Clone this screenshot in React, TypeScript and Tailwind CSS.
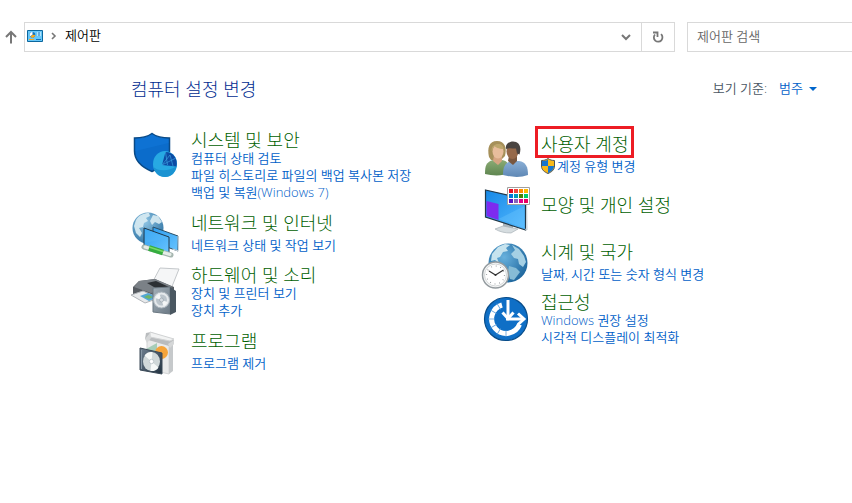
import type { ReactNode } from "react";

interface CategoryProps {
  icon: ReactNode;
  title: string;
  links?: string[];
  shield?: boolean;
  highlighted?: boolean;
}

const Svg = ({ children }: { children: ReactNode }) => (
  <svg viewBox="0 0 48 48" className="w-12 h-12 shrink-0 overflow-visible" aria-hidden="true">
    {children}
  </svg>
);

const SecurityIcon = () => (
  <Svg>
    <path d="M21 3.500C16 7 10 8 3.500 8v13c0 10 7 16 17.500 20.500C31.500 37 38.500 31 38.500 21V8C32 8 26 7 21 3.500Z" fill="#0b6ccb" stroke="#0a4a86" strokeWidth="1.500" />
    <path d="M21 4.500C16 8 10 9 4.500 9v12l33-8V9C32 9 26 8 21 4.500Z" fill="#1177d8" opacity=".6" />
    <ellipse cx="34" cy="34" rx="12" ry="13" fill="#27a9e3" />
    <path d="M22.500 37C26 41 38 42 45.500 36 44.500 43 40 47 34 47c-6 0-10.500-4-11.500-10Z" fill="#1b93d2" />
    <path d="M34.500 22 31 35l14.500 1.500C47 29 42.500 22 34.500 22Z" fill="#0c4ba4" />
    <path d="M31 35 39 25l3 11M31 35l14-7M34.500 22l2 13" stroke="#3a9fe0" strokeWidth=".7" fill="none" />
  </Svg>
);

const NetworkIcon = () => (
  <Svg>
    <defs>
      <radialGradient id="netGlobe" cx=".4" cy=".3" r=".8">
        <stop offset="0" stopColor="#8fc5e4" />
        <stop offset="1" stopColor="#286d9f" />
      </radialGradient>
      <linearGradient id="netScreen" x1="0" y1="0" x2="1" y2="1">
        <stop offset="0" stopColor="#2d9df0" />
        <stop offset="1" stopColor="#67c4ff" />
      </linearGradient>
    </defs>
    <circle cx="17" cy="19" r="15.500" fill="url(#netGlobe)" />
    <path d="M5 11C8 6 13 4 18 4l1 3-4 2 2 3-4 2-1 4-4 1 3 5-2 4-4-4-2-7Z" fill="#d9ecf3" opacity=".9" />
    <path d="m22 6 5 1 4 6-3 2-4-2-3 3-2-4Z" fill="#d9ecf3" opacity=".9" />
    <path d="m22 18 25 9v15l-25-9Z" fill="url(#netScreen)" stroke="#294f68" />
    <path d="m47 27 .500 15-6-2" stroke="#d6dde0" fill="none" />
    <path d="m13 19 25 9v16l-25-8Z" fill="url(#netScreen)" stroke="#20394a" />
    <path d="m14 34 23-5-23-9Z" fill="#55b7f8" opacity=".45" />
    <path d="m13 38 27 8" stroke="#a6b6b0" strokeWidth="5" strokeLinecap="round" />
    <path d="m14 38 25 7.500" stroke="#e6ece8" strokeWidth="3" strokeLinecap="round" />
    <path d="m18 39 14 4.500" stroke="#35ad3f" strokeWidth="6" />
    <path d="m18 38 14 4.500" stroke="#79da68" strokeWidth="1.500" />
  </Svg>
);

const HardwareIcon = () => (
  <Svg>
    <defs>
      <linearGradient id="speaker" x1="0" y1="0" x2="1" y2="1">
        <stop offset="0" stopColor="#a3afb8" />
        <stop offset="1" stopColor="#6b7985" />
      </linearGradient>
    </defs>
    <path d="m29 0 19 1-8 20-20-4Z" fill="#f5f6f7" stroke="#c4c8cb" />
    <path d="m8 13 16-2 19 8v8l-26 6L2 26v-7Z" fill="#565b61" />
    <path d="m8 13 16-2 18 8-22 6L3 19Z" fill="#7b8187" />
    <path d="m16 15 9-2 13 6-10 3Z" fill="#2c3034" />
    <path d="m0 27 12-4 16 7-14 5Z" fill="#e8eaec" stroke="#b0b4b8" />
    <path d="m9 28 8-3 10 4-9 4Z" fill="#53a7d6" />
    <path d="m13 29 4-2 5 2-4 2Z" fill="#6eb568" />
    <path d="m22 20 17-1v27l-17-2Z" fill="url(#speaker)" stroke="#6b7882" />
    <path d="m39 19 6 4v21l-6 3Z" fill="#4a5761" />
    <circle cx="30.500" cy="32" r="8" fill="#e4e8eb" stroke="#aab4bc" />
    <circle cx="30.500" cy="32" r="5.500" fill="#bcc5cc" />
    <path d="m30.500 32-6-2a6 6 0 0 1 4-4Zm0 0 6 2a6 6 0 0 1-4 4Z" fill="#f4f6f7" />
    <circle cx="30.500" cy="32" r="2" fill="#d5dbe0" stroke="#9aa5ae" strokeWidth=".7" />
  </Svg>
);

const ProgramsIcon = () => (
  <Svg>
    <defs>
      <linearGradient id="discCase" x1="0" y1="0" x2="1" y2="1">
        <stop offset="0" stopColor="#6f8191" />
        <stop offset="1" stopColor="#22313f" />
      </linearGradient>
    </defs>
    <path d="m16 12 22 5v30l-22-5Z" fill="#e9eaea" stroke="#d3d5d6" />
    <path d="m38 17 4-2v29l-4 3Z" fill="#c6c9cb" />
    <path d="m15 6 5-1 23 8v4l-5 2-24-7Z" fill="#b9bcbe" />
    <path d="m19 5 24 7-4 2-20-4Z" fill="#f2f3f3" stroke="#d1d3d4" />
    <path d="m14 12 5-6 1 5-4 5ZM37 17l6-4v4l-4 4Z" fill="#d5d7d8" />
    <path d="m15 22 11-6v10l-4 2Z" fill="#a6cdb8" />
    <circle cx="30.500" cy="25.500" r="6.500" fill="#f5a43a" />
    <path d="m9 21 22 5v21L9 43Z" fill="url(#discCase)" stroke="#3a4957" />
    <ellipse cx="20.500" cy="34.500" rx="8.500" ry="9.500" fill="#d0d8d9" />
    <path d="m20.500 34.500-7-6c2-3 5-4 8-3.500Zm0 0 7 6c-2 3-5 4-8 3.500Z" fill="#f6f9f8" />
    <circle cx="20.500" cy="34.500" r="2.200" fill="#fff" stroke="#b5bfc4" strokeWidth=".8" />
    <path d="M10.500 23v19" stroke="#8798a6" />
  </Svg>
);

const UsersIcon = () => (
  <Svg>
    <defs>
      <linearGradient id="womanTop" x1="0" y1="0" x2="0" y2="1">
        <stop offset="0" stopColor="#8bab75" />
        <stop offset="1" stopColor="#5f8650" />
      </linearGradient>
      <linearGradient id="manTop" x1="0" y1="0" x2="0" y2="1">
        <stop offset="0" stopColor="#8aafd6" />
        <stop offset="1" stopColor="#5f88b5" />
      </linearGradient>
    </defs>
    <path d="M8 27c-2-9 0-16 8-16 8 0 10 7 8 15l-4 4H10Z" fill="#a6905a" />
    <path d="M4 44c0-8 1-12 8-14h9c6 1 8 5 8 13-7 3-17 3-25 1Z" fill="url(#womanTop)" />
    <path d="M13 25h8v6l-4 4-5-4Z" fill="#d6a582" />
    <ellipse cx="17" cy="21.500" rx="5.500" ry="7" fill="#e8bd9c" />
    <path d="M10.500 21c0-5 3-7 7-7 3 0 5 2 5 5-5 0-8-2-9-3Z" fill="#bda66c" />
    <path d="M22 45c0-8 2-12 8-14h8c7 1 9 6 9 14-8 3-17 2-25 0Z" fill="url(#manTop)" />
    <path d="M28 26h8v5l-4 4-5-4Z" fill="#79573f" />
    <ellipse cx="31.500" cy="21.500" rx="6" ry="7.500" fill="#96694a" />
    <path d="M25 19C24 14 28 11.500 32 11.500c6 0 9 5 6.500 13l-2.500-1-1-5c-4 0-7-1-10 .500Z" fill="#4a4441" />
  </Svg>
);

const SWATCHES = [
  "#e81123", "#f2453c", "#ff8c00", "#ffb900",
  "#0078d7", "#0099bc", "#498205", "#00cc6a",
  "#5b10c5", "#8764b8", "#e3008c", "#ea005e",
];

const AppearanceIcon = () => (
  <Svg>
    <defs>
      <linearGradient id="monitor" x1="0" y1="0" x2="1" y2="1">
        <stop offset="0" stopColor="#1688e6" />
        <stop offset="1" stopColor="#55baff" />
      </linearGradient>
    </defs>
    <path d="m22 36 10 4v5l-10-1Z" fill="#aab5bc" />
    <path d="m14 45 8-3 15 3-7 4c-6 0-11-1-16-4Z" fill="#d6dde0" stroke="#a9b2b7" strokeWidth=".7" />
    <path d="m4.500 6 40 9v31l-40-13Z" fill="url(#monitor)" stroke="#223746" strokeWidth="1.200" />
    <path d="m45.500 16 .500 30-2-1" stroke="#bec8cd" fill="none" />
    <path d="m5.500 17 12 3v16L5.500 32Z" fill="#7d2bef" />
    <path d="m17.500 35 26-13v22Z" fill="#78ccff" opacity=".3" />
    <path d="M26.500 3.500h22v17h-22Z" fill="#fff" stroke="#a0a0a0" />
    {SWATCHES.map((c, i) => (
      <rect key={c} x={28 + (i % 4) * 5} y={5 + Math.floor(i / 4) * 5} width="4" height="4" fill={c} />
    ))}
  </Svg>
);

const ClockIcon = () => (
  <Svg>
    <defs>
      <radialGradient id="clockGlobe" cx=".4" cy=".35" r=".7">
        <stop offset="0" stopColor="#68b1dd" />
        <stop offset="1" stopColor="#1c649b" />
      </radialGradient>
    </defs>
    <circle cx="27" cy="25" r="19.500" fill="url(#clockGlobe)" />
    <path d="m11 16 6-7 7-3 5 1-4 3 2 3-5 1-3 5-3 1 2 5-4-3-4 1Z" fill="#c6e3ee" />
    <path d="m31 7 7 4 5 7 2 6-3 5-4-3-1-5-4-1-3-4 4-4Z" fill="#a5d0e4" />
    <path d="m28 28 7 2 4 4-6 8-4-1-2-8Z" fill="#86bcd6" />
    <circle cx="14.500" cy="37" r="13" fill="#f7f8f8" stroke="#949b9f" strokeWidth="1.500" />
    <circle cx="14.500" cy="37" r="11" fill="#fff" stroke="#d4d7d8" />
    <circle cx="14.500" cy="37" r="9" fill="none" stroke="#8b9094" strokeWidth="1.200" strokeDasharray=".8 3.912" />
    <path d="m8 33 6.500 4 8-5" stroke="#333" strokeWidth="1.200" fill="none" />
    <circle cx="14.500" cy="37" r="1" fill="#333" />
  </Svg>
);

const RING_GAPS = [180, 210, 240, 270, 300, 330];

const AccessIcon = () => (
  <Svg>
    <circle cx="25" cy="24" r="21.500" fill="#0f6fc6" stroke="#084c89" strokeWidth="1.200" />
    <path d="M21 10A14.500 14.500 0 1 0 38.500 29.500" fill="none" stroke="#fff" strokeWidth="5" />
    {RING_GAPS.map((deg) => (
      <path key={deg} d="M25 6v7" stroke="#5b9cd8" strokeWidth=".8" transform={`rotate(${deg} 25 24)`} />
    ))}
    <path d="M27 4v18M28 24h15" stroke="#0f6fc6" strokeWidth="5" />
    <path d="M27 5v18M25 24h18" stroke="#fff" strokeWidth="3" />
    <path d="m21.500 17.500 5.500 6 5.500-6M37 18.500l6 5.500-6 5.500" fill="none" stroke="#fff" strokeWidth="3" />
  </Svg>
);

const UacShield = () => (
  <svg viewBox="0 0 14 16" className="w-3.5 h-4 shrink-0" aria-hidden="true">
    <path d="M7 .500C5 2 3 2.500.500 2.500V8c0 4 3 6 6.500 7.500C10.500 14 13.500 12 13.500 8V2.500C11 2.500 9 2 7 .500Z" fill="#f8b818" stroke="#4e5357" />
    <path d="M7 1.500V8H1V3c2.500 0 4.500-.5 6-1.500ZM7 8h6c0 3.500-2.500 5.500-6 7Z" fill="#1674ce" />
  </svg>
);

const ControlPanelIcon = () => (
  <svg viewBox="0 0 16 12" className="w-4 h-3 shrink-0" aria-hidden="true">
    <path d="M.5.5h15v11H.5Z" fill="#67c7f8" stroke="#0b679e" />
    <circle cx="5.500" cy="4.800" r="2.800" fill="#1373bc" />
    <path d="M5.500 4.800V2a2.800 2.800 0 0 0-2.400 4.300Z" fill="#fff" />
    <path d="M5.500 4.800 8.300 5A2.800 2.800 0 0 1 3.500 6.800Z" fill="#f8a91b" />
    <path d="M10 3h4M10 5h4" stroke="#fff" />
    <path d="M12 2v4" stroke="#1373bc" />
    <path d="M2 9.500h5" stroke="#f8a91b" />
    <path d="M9 9.500h5" stroke="#1373bc" />
  </svg>
);

const LEFT: CategoryProps[] = [
  {
    icon: <SecurityIcon />,
    title: "시스템 및 보안",
    links: ["컴퓨터 상태 검토", "파일 히스토리로 파일의 백업 복사본 저장", "백업 및 복원(Windows 7)"],
  },
  { icon: <NetworkIcon />, title: "네트워크 및 인터넷", links: ["네트워크 상태 및 작업 보기"] },
  { icon: <HardwareIcon />, title: "하드웨어 및 소리", links: ["장치 및 프린터 보기", "장치 추가"] },
  { icon: <ProgramsIcon />, title: "프로그램", links: ["프로그램 제거"] },
];

const RIGHT: CategoryProps[] = [
  { icon: <UsersIcon />, title: "사용자 계정", links: ["계정 유형 변경"], shield: true, highlighted: true },
  { icon: <AppearanceIcon />, title: "모양 및 개인 설정" },
  { icon: <ClockIcon />, title: "시계 및 국가", links: ["날짜, 시간 또는 숫자 형식 변경"] },
  { icon: <AccessIcon />, title: "접근성", links: ["Windows 권장 설정", "시각적 디스플레이 최적화"] },
];

function Category({ icon, title, links = [], shield, highlighted }: CategoryProps) {
  return (
    <li className={`flex gap-3 ${links.length > 2 ? "items-start" : "items-center"}`}>
      {icon}
      <div className={`flex flex-col items-start ${links.length === 1 ? "gap-1" : ""} ${links.length ? "" : "pb-1.5"}`}>
        <h2 className="relative text-[18px] leading-5 font-light">
          <a href="#" className="text-[#006000]">{title}</a>
          {highlighted && (
            <span className="absolute -inset-x-1.5 -top-2 -bottom-1 border-3 border-[#ed1c24] pointer-events-none" />
          )}
        </h2>
        <div className="flex flex-col items-start">
          {links.map((link) => (
            <a key={link} href="#" className="flex items-center gap-0.5 text-[13px] leading-[17px] text-[#0060c8]">
              {shield && <UacShield />}
              {link}
            </a>
          ))}
        </div>
      </div>
    </li>
  );
}

export default function App() {
  return (
    <div className="min-h-screen bg-white pt-[22px] overflow-x-hidden font-[350] font-['Open_Sans','Noto_Sans_CJK_KR',sans-serif]">
      {/* Address bar */}
      <header className="flex items-center text-[13px]">
        <button aria-label="위로" className="w-6 h-[30px] flex items-center pl-1 shrink-0">
          <svg viewBox="0 0 14 14" className="w-3.5 h-3.5" fill="none" stroke="#777" strokeWidth="2">
            <path d="M7 13.500V2M2 7l5-5 5 5" />
          </svg>
        </button>
        <div className="flex-1 flex h-[30px] border border-[#d9d9d9]">
          <div className="flex-1 flex items-center pl-0.5 pb-0.5">
            <ControlPanelIcon />
            <svg viewBox="0 0 6 8" className="w-1.5 h-2 mx-2 shrink-0" fill="none" stroke="#777" strokeWidth="1.600">
              <path d="m1 1 3 3-3 3" />
            </svg>
            <a href="#" className="text-black">제어판</a>
          </div>
          <button aria-label="이전 위치" className="w-[30px] flex items-center justify-center">
            <svg viewBox="0 0 10 7" className="w-2.5 h-[7px]" fill="none" stroke="#777" strokeWidth="2">
              <path d="m1 1 4 4 4-4" />
            </svg>
          </button>
          <button aria-label="새로 고침" className="w-[33px] border-l border-[#d9d9d9] flex items-center justify-center">
            <svg viewBox="0 0 12 12" className="w-3 h-3" fill="none" stroke="#777" strokeWidth="1.800">
              <path d="M9 3.200A4.300 4.300 0 1 1 3 3.500" />
              <path d="M1 1.500h4.500V6" />
            </svg>
          </button>
        </div>
        <input
          type="search"
          aria-label="제어판 검색"
          placeholder="제어판 검색"
          className="ml-3 w-[165px] h-[30px] border border-r-0 border-[#d9d9d9] pl-[9px] pb-0.5 placeholder:text-[#666] outline-none"
        />
      </header>

      <main className="pl-[131px] pr-[21px] pt-[25px] pb-8">
        <div className="flex items-center justify-between h-6 pr-3.5">
          <h1 className="text-[18px] leading-6 font-light text-[#002c90]">컴퓨터 설정 변경</h1>
          <div className="flex items-center gap-3 text-[13px] text-[#4a5663]">
            <span>보기 기준:</span>
            <button className="flex items-center gap-1.5 text-[#0060c8]">
              범주
              <svg viewBox="0 0 8 4" className="w-2 h-1" fill="#0066cc">
                <path d="M0 0h8L4 4Z" />
              </svg>
            </button>
          </div>
        </div>

        <div className="grid grid-cols-2 items-start mt-[29px]">
          <ul className="flex flex-col gap-2">
            {LEFT.map((c) => (
              <Category key={c.title} {...c} />
            ))}
          </ul>
          <ul className="flex flex-col gap-1.5">
            {RIGHT.map((c) => (
              <Category key={c.title} {...c} />
            ))}
          </ul>
        </div>
      </main>
    </div>
  );
}
